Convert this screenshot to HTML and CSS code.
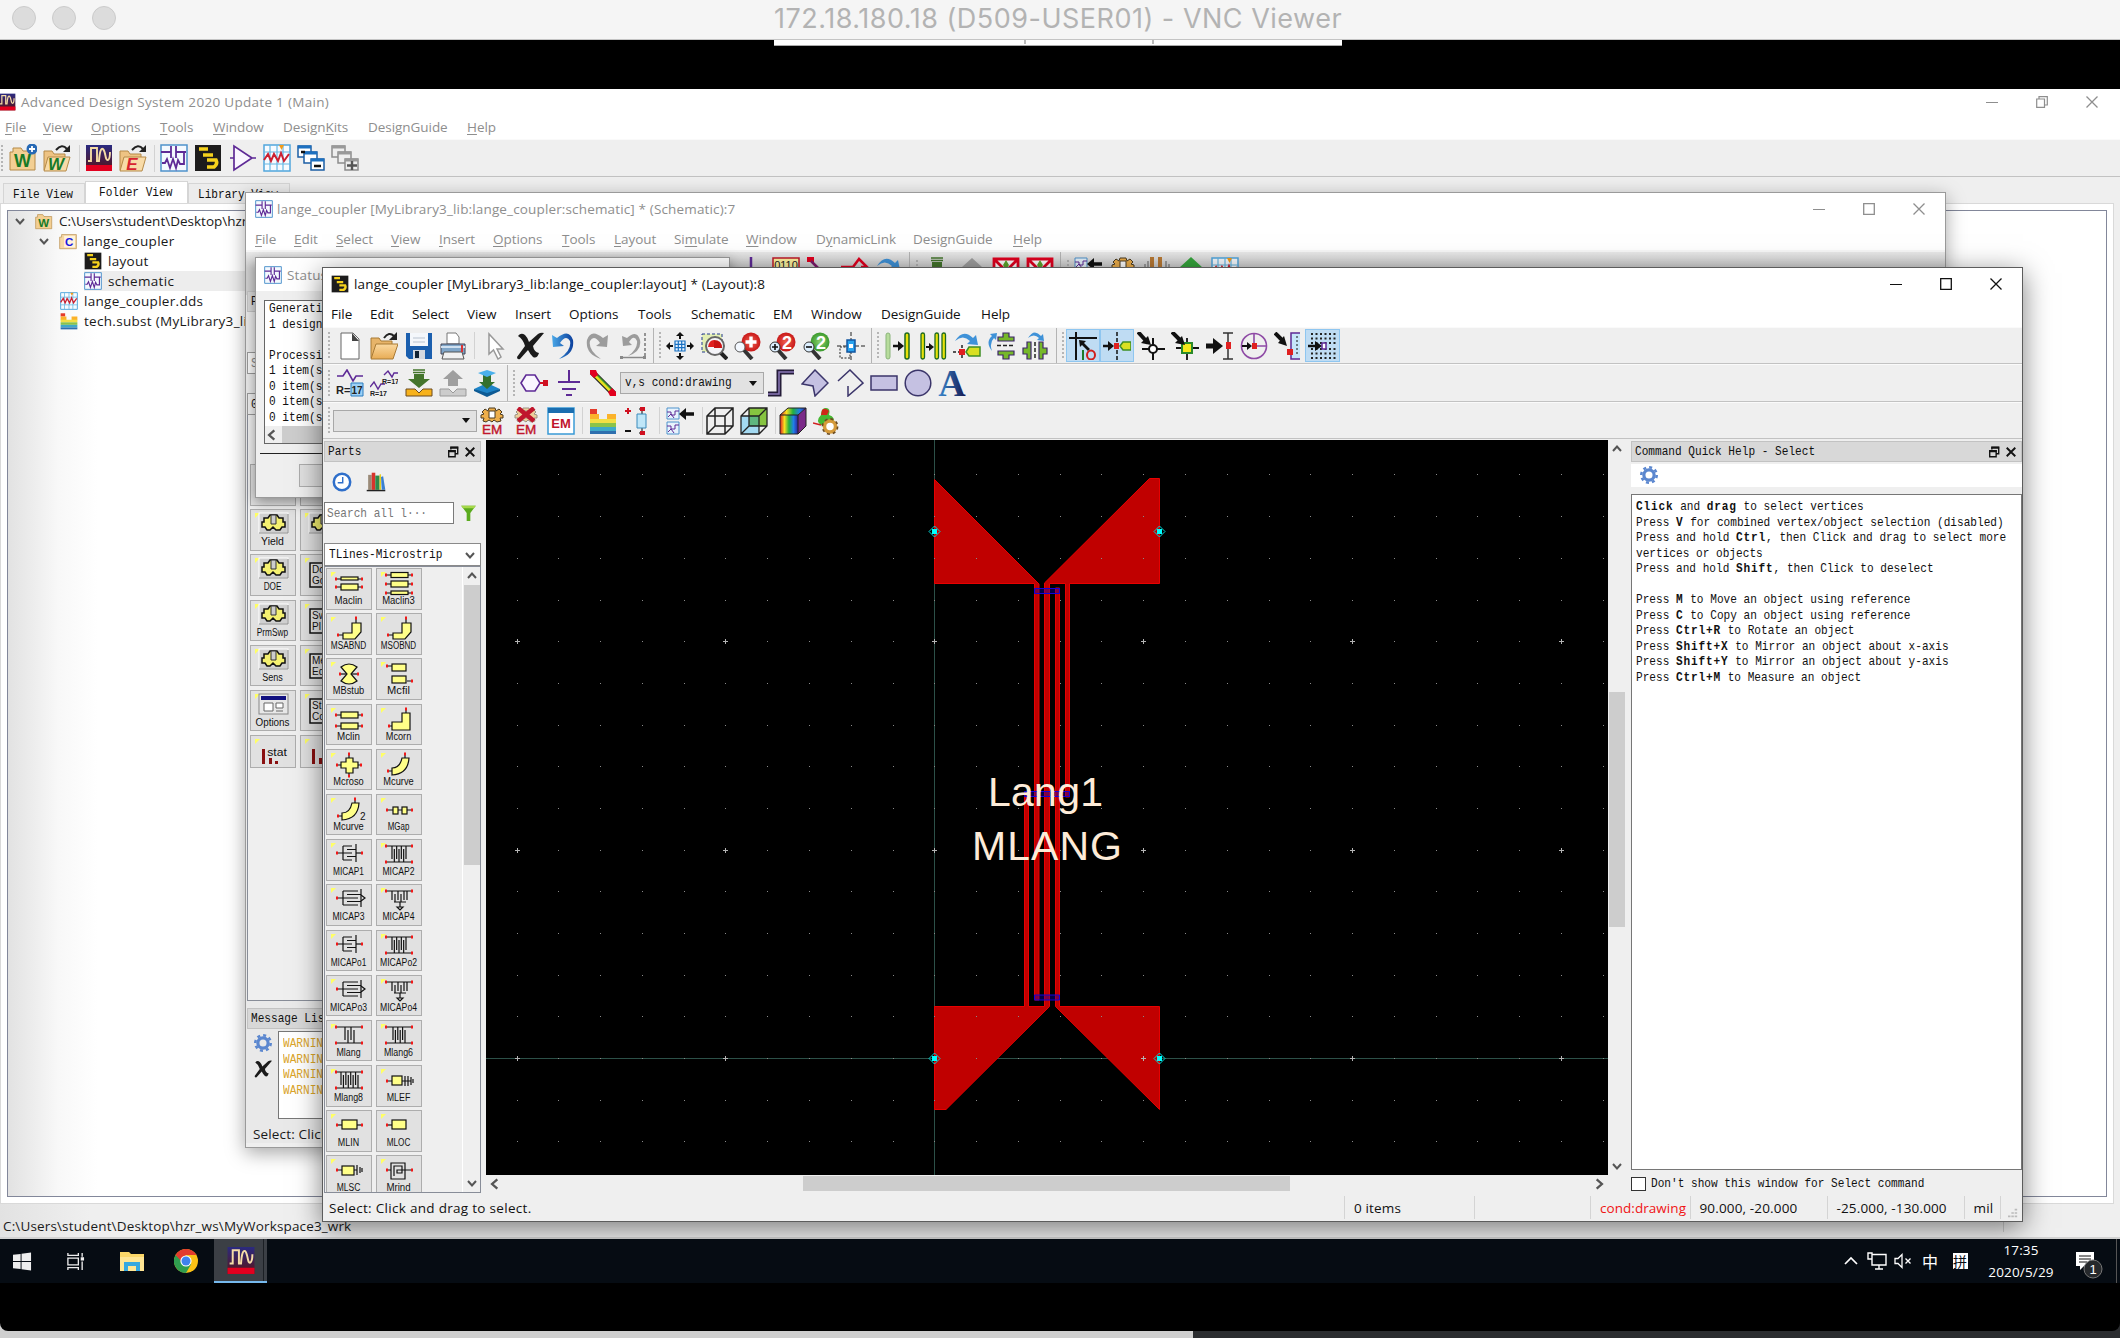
FILE: index.html
```html
<!DOCTYPE html>
<html lang="en">
<head>
<meta charset="utf-8">
<title>172.18.180.18 (D509-USER01) - VNC Viewer</title>
<link rel="stylesheet" href="styles.css">
</head>
<body>
<svg class="defs" aria-hidden="true">
<defs>
<linearGradient id="gUndo" x1="0" x2="1"><stop offset="0" stop-color="#4aa8e8"/><stop offset="1" stop-color="#0b3f9c"/></linearGradient>
<linearGradient id="gFold" x1="0" y1="0" x2="0" y2="1"><stop offset="0" stop-color="#fbd9a0"/><stop offset="1" stop-color="#e8ac55"/></linearGradient>
<linearGradient id="gAds" x1="0" y1="0" x2="0" y2="1"><stop offset="0" stop-color="#2a2a80"/><stop offset="1" stop-color="#5a1418"/></linearGradient>
<linearGradient id="gRain" x1="0" x2="1"><stop offset="0" stop-color="#e02020"/><stop offset=".25" stop-color="#f8e020"/><stop offset=".5" stop-color="#20b040"/><stop offset=".75" stop-color="#2080e8"/><stop offset="1" stop-color="#3020a0"/></linearGradient>
<linearGradient id="gA" x1="0" x2="1"><stop offset="0" stop-color="#3a8ad0"/><stop offset="1" stop-color="#14144c"/></linearGradient>
<radialGradient id="gRed"><stop offset="0" stop-color="#f06050"/><stop offset="1" stop-color="#c81818"/></radialGradient>
<radialGradient id="gGrn"><stop offset="0" stop-color="#8cd070"/><stop offset="1" stop-color="#3a9a2c"/></radialGradient>
<symbol id="wfolder" viewBox="0 0 28 28"><path d="M1 8V26H26V7H14L12 4H4V8Z" fill="#f3cf93" stroke="#b58a48"/><text x="13.500" y="23" class="glyph" font-size="18" fill="#177a27" text-anchor="middle">W</text></symbol>
<symbol id="wnew" viewBox="0 0 28 28"><use href="#wfolder"/><circle cx="23" cy="5" r="5.500" fill="#2769b5"/><path d="M23 2v6M20 5h6" stroke="#fff" stroke-width="1.800"/></symbol>
<symbol id="wopen" viewBox="0 0 28 28"><path d="M1 26V7H9L11 10H22V13" fill="#eec383" stroke="#b58a48"/><path d="M5 13H27L23 27H1Z" fill="#f8dba8" stroke="#b58a48"/><text x="13" y="26" class="glyph" font-size="17" fill="#177a27" text-anchor="middle" font-style="italic">W</text><path d="M13 6Q19-1 24 5" fill="none" stroke="#222" stroke-width="2"/><path d="M27 1V8H20Z" fill="#222"/></symbol>
<symbol id="eopen" viewBox="0 0 28 28"><path d="M1 26V7H9L11 10H22V13" fill="#eec383" stroke="#b58a48"/><path d="M5 13H27L23 27H1Z" fill="#f8dba8" stroke="#b58a48"/><text x="13" y="26" class="glyph" font-size="17" fill="#d8232f" text-anchor="middle" font-style="italic">E</text><path d="M13 6Q19-1 24 5" fill="none" stroke="#222" stroke-width="2"/><path d="M27 1V8H20Z" fill="#222"/></symbol>
<symbol id="ads" viewBox="0 0 28 28"><path d="M1 1H27V27H1Z" fill="url(#gAds)"/><path d="M1 21H27V27H1Z" fill="#e2001f"/><path d="M3 17H6V4H12V17H14Q15 3 18 5C21 8 20 17 23 16Q25 15 25 8" fill="none" stroke="#f5dca6" stroke-width="1.900"/></symbol>
<symbol id="sch" viewBox="0 0 28 28"><path d="M1 1H27V27H1Z" fill="#f4f9fe" stroke="#4f93cc" stroke-width="1.500"/><path d="M1 8H11M11 2V14M16 2V14M16 8H26M2 19H5L7 15 10 24 13 15 16 24 18 16 20 20H24V9" fill="none" stroke="#5e2a96" stroke-width="1.800"/></symbol>
<symbol id="lay" viewBox="0 0 28 28"><path d="M1 1H27V27H1Z" fill="#1d1c1c"/><path d="M5 5H14M9 11H19M13 16H22Q24 20 20 23H13" fill="none" stroke="#f6d21c" stroke-width="3.600"/></symbol>
<symbol id="amp" viewBox="0 0 28 28"><path d="M1 14H5M5 2V26L23 14ZM23 14H27" fill="#faf6ff" stroke="#5e2a96" stroke-width="1.700"/></symbol>
<symbol id="dds" viewBox="0 0 28 28"><path d="M1 1H27V27H1Z" fill="#f7fbff" stroke="#52a7dd" stroke-width="1.500"/><path d="M7 1V27M14 1V27M20 1V27M1 8H27M1 20H27" stroke="#66b8e4" stroke-width="1.200"/><path d="M1 16L5 10 8 17 11 10 15 17 18 9 21 17 26 10" fill="none" stroke="#cc2030" stroke-width="2"/><path d="M16 1H21L18.500 6Z" fill="#f39a17"/></symbol>
<symbol id="casc" viewBox="0 0 28 28"><g fill="#fff" stroke="#1d5fa5" stroke-width="1.500"><path d="M1 2H14V13H1Z"/><path d="M7 8H20V19H7Z"/><path d="M14 15H27V26H14Z"/></g><path d="M1 3H14M7 9H20M14 16H27" stroke="#1d70c0" stroke-width="3"/><path d="M4 8H8M17 22H24" stroke="#111" stroke-width="2.400"/></symbol>
<symbol id="cascg" viewBox="0 0 28 28"><g fill="#eee" stroke="#8d8d8d" stroke-width="1.500"><path d="M1 2H14V13H1Z"/><path d="M7 8H20V19H7Z"/><path d="M14 15H27V26H14Z"/></g><path d="M1 3H14M7 9H20M14 16H27" stroke="#999" stroke-width="3"/><path d="M16 21.500H26M21 17V26" stroke="#555" stroke-width="2.400"/></symbol>
<symbol id="cfold" viewBox="0 0 28 28"><path d="M1 8V26H27V4H4V8Z" fill="#f6d7a4" stroke="#b58a48"/><path d="M8 6H25V24H8Z" fill="#fff3de"/><text x="16" y="22" class="glyph" font-size="18" fill="#1a1ae0" text-anchor="middle">C</text></symbol>
<symbol id="sub" viewBox="0 0 28 28"><path d="M1 2H8V7H1Z" fill="#e43a2a"/><path d="M1 7H10V13H18V7H27V13H1Z" fill="#fbb22a"/><path d="M1 12H27V16H1Z" fill="#f3df45"/><path d="M1 16H27V20H1Z" fill="#8bc34a"/><path d="M1 20H27V24H1Z" fill="#3fa9c9"/><path d="M1 24H27V27H1Z" fill="#2e6fae"/></symbol>
<symbol id="new" viewBox="0 0 28 28"><path d="M5 1H17L23 7V27H5Z" fill="#fff" stroke="#666"/><path d="M16 1V9H23Z" fill="#444"/></symbol>
<symbol id="open" viewBox="0 0 28 28"><path d="M1 26V6H9L11 9H22V12" fill="#e7b469" stroke="#a87a35"/><path d="M6 12H28L23 27H1Z" fill="url(#gFold)" stroke="#a87a35"/><path d="M14 6Q19-1 24 4" fill="none" stroke="#222" stroke-width="2"/><path d="M27 0V8H19Z" fill="#222"/></symbol>
<symbol id="save" viewBox="0 0 28 28"><path d="M1 1H27V27H4L1 24Z" fill="#1b5fae"/><path d="M5 1H23V14H5Z" fill="#f4f7fb"/><path d="M8 6H20M8 10H20" stroke="#b9c3d0"/><path d="M8 18H20V27H8Z" fill="#d5d9e0"/><path d="M10 19H14V26H10Z" fill="#123"/></symbol>
<symbol id="print" viewBox="0 0 28 28"><path d="M8 12V1H17L20 5V12Z" fill="#fff" stroke="#777"/><path d="M2 12H26V22H2Z" fill="#7fa5c8" stroke="#445"/><path d="M2 15H26" stroke="#cfe0f0" stroke-width="2"/><path d="M5 20H23L25 27H3Z" fill="#f2f2f2" stroke="#555"/><path d="M23 13V20" stroke="#d33" stroke-width="2"/></symbol>
<symbol id="cur" viewBox="0 0 28 28"><path d="M7 2V22L11.500 18 16 27 19 25 15 17H21Z" fill="#fff" stroke="#999" stroke-width="1.500"/></symbol>
<symbol id="del" viewBox="0 0 28 28"><path d="M2 4Q5 0 9 3Q12 6 13 10L22 2Q25 0 28 1L17 14Q18 20 23 21Q21 27 17 25Q14 22 12 18L4 27Q1 28 1 25L9 14Q7 7 2 4Z" fill="#1b1b1b"/></symbol>
<symbol id="undo" viewBox="0 0 28 28"><path d="M2 3L3 15 14 14 10 11Q16 2 20 9Q22 18 9 27Q25 22 23 8Q19-4 7 6Z" fill="url(#gUndo)"/></symbol>
<symbol id="redo" viewBox="0 0 28 28"><path d="M24 3L23 15 12 14 16 11Q10 2 6 9Q4 18 17 27Q1 22 3 8Q7-4 19 6Z" fill="#9c9c9c"/></symbol>
<symbol id="undot" viewBox="0 0 28 28"><path d="M3 4L4 14 13 13 10 10Q15 2 18 9Q19 17 9 24Q23 19 21 8Q18-3 8 6Z" fill="#9c9c9c"/><path d="M26 1V24" stroke="#777" stroke-dasharray="3 2" stroke-width="1.500"/><path d="M3 25.500H25" stroke="#888" stroke-width="1.500"/><path d="M1 24H4V27H1ZM24 24H27V27H24Z" fill="#888"/></symbol>
<symbol id="pan" viewBox="0 0 28 28"><path d="M9 9H19V19H9ZM12.300 9V19M15.700 9V19M9 12.300H19M9 15.700H19" fill="#e6f2ff" stroke="#1971c2" stroke-width="1.200"/><path d="M14 7V3M14 21V25M7 14H3M21 14H25" stroke="#111" stroke-width="2"/><path d="M14 0L18 4H10ZM14 28L18 24H10ZM0 14L4 10V18ZM28 14L24 10V18Z" fill="#111"/></symbol>
<symbol id="zarea" viewBox="0 0 28 28"><path d="M2 2H22V20H2Z" fill="#e3efb4" stroke="#223a8c" stroke-dasharray="3 2"/><path d="M20 20L27 27" stroke="#222" stroke-width="4"/><circle cx="15" cy="14" r="9" fill="#f4f4f8" stroke="#666" stroke-width="2"/><path d="M15 8A6 6 0 0 0 9 14H15Z" fill="#fff"/><path d="M14 8V15H8Q9 8 14 8Z" fill="#e02020"/><path d="M14 8Q22 8 22 16H14Z" fill="#c81414"/></symbol>
<symbol id="zin" viewBox="0 0 28 28"><path d="M10 18L18 27" stroke="#333" stroke-width="4"/><circle cx="17" cy="10" r="9.500" fill="url(#gRed)"/><path d="M17 4.500V15.500M11.500 10H22.500" stroke="#fff" stroke-width="3.400"/><circle cx="6" cy="15" r="5" fill="#f3f8ff" stroke="#555"/></symbol>
<symbol id="z2i" viewBox="0 0 28 28"><path d="M9 18L17 27" stroke="#333" stroke-width="4"/><circle cx="17" cy="10" r="9.500" fill="url(#gRed)"/><text x="18" y="16.500" class="glyph" font-size="18" fill="#fff" text-anchor="middle">2</text><circle cx="6" cy="15" r="5" fill="#dcefff" stroke="#333"/><path d="M3 15H9M6 12V18" stroke="#111" stroke-width="1.600"/></symbol>
<symbol id="z2o" viewBox="0 0 28 28"><path d="M9 18L17 27" stroke="#333" stroke-width="4"/><circle cx="17" cy="10" r="9.500" fill="url(#gGrn)"/><text x="18" y="16.500" class="glyph" font-size="18" fill="#fff" text-anchor="middle">2</text><circle cx="6" cy="15" r="5" fill="#dcefff" stroke="#333"/><path d="M3 15H9" stroke="#111" stroke-width="1.600"/></symbol>
<symbol id="orig" viewBox="0 0 28 28"><path d="M14 0V28M0 14H28" stroke="#222" stroke-dasharray="4 2"/><path d="M3 15H13V26H3Z" fill="none" stroke="#222" stroke-dasharray="2 1.500"/><path d="M10 8H18V20H10Z" fill="#29a3ef" stroke="#1256a0" stroke-width="1.500"/><path d="M12 12H16V16H12Z" fill="#fff"/></symbol>
<symbol id="copy1" viewBox="0 0 28 28"><rect x="2" y="1" width="4" height="26" rx="2" fill="#b7dc9c" stroke="#8ab47a"/><rect x="21" y="1" width="4" height="26" rx="2" fill="#e8e20a" stroke="#1e6a1e" stroke-width="1.500"/><path d="M9 14H15" stroke="#111" stroke-width="2.500"/><path d="M14 9L20 14 14 19Z" fill="#111"/></symbol>
<symbol id="copy2" viewBox="0 0 28 28"><g fill="#e8e20a" stroke="#1e6a1e" stroke-width="1.300"><rect x="2" y="1" width="3.500" height="26" rx="1.700"/><rect x="16" y="1" width="3.500" height="26" rx="1.700"/><rect x="23" y="1" width="3.500" height="26" rx="1.700"/></g><path d="M7 15H11" stroke="#111" stroke-width="2"/><path d="M10 11L15 15 10 19Z" fill="#111"/></symbol>
<symbol id="rot" viewBox="0 0 28 28"><path d="M2 9Q10-4 20 6L23 3 25 13 14 12 17 9Q10 2 2 9Z" fill="#3f92d8"/><path d="M9 13V28M0 20H6" stroke="#222" stroke-dasharray="3 2" stroke-width="1.500"/><path d="M6 17H12V23H6Z" fill="#e02020"/><path d="M13 20L16 15H27V24H16Z" fill="#d9e021" stroke="#3f8f24" stroke-width="1.500"/></symbol>
<symbol id="mirx" viewBox="0 0 28 28"><path d="M5 19Q-2 10 5 4L3 2 10 1 9 8 7 6Q2 11 5 19Z" fill="#3f92d8"/><path d="M10 13.500H27" stroke="#222" stroke-dasharray="4 2" stroke-width="1.500"/><path d="M16 1H22V5H27V9H11V5H16ZM11 19H27V23H22V27H16V23H11Z" fill="#76b82a" stroke="#3d256b" stroke-width="1.200"/></symbol>
<symbol id="miry" viewBox="0 0 28 28"><path d="M7 6Q13-4 20 4L22 2 23 9 16 8 18 6Q13 1 7 6Z" fill="#3f92d8"/><path d="M14 10V28" stroke="#222" stroke-dasharray="4 2" stroke-width="1.500"/><path d="M6 10H10V27H6V22H2V16H6ZM18 10H22V16H26V22H22V27H18Z" fill="#76b82a" stroke="#3d256b" stroke-width="1.200"/></symbol>
<symbol id="s1" viewBox="0 0 28 28"><path d="M7 0V28M0 6H28" stroke="#111" stroke-width="2"/><path d="M10 8L17 9 15 11 21 17 19 19 13 13 11 15Z" fill="#111"/><path d="M14 18V28" stroke="#1e7a2a" stroke-width="2"/><ellipse cx="22" cy="23" rx="4" ry="4.500" fill="none" stroke="#d0201c" stroke-width="2"/></symbol>
<symbol id="s2" viewBox="0 0 28 28"><path d="M14 0V28" stroke="#111" stroke-dasharray="4 2" stroke-width="1.500"/><path d="M0 14H7" stroke="#111" stroke-width="2.500"/><path d="M5 9L11 14 5 19Z" fill="#111"/><path d="M11 11H16V17H11Z" fill="#e02020"/><path d="M17 14L20 10H28V18H20Z" fill="#d9e021" stroke="#3f8f24" stroke-width="1.500"/></symbol>
<symbol id="s3" viewBox="0 0 28 28"><path d="M16 6V28M5 17H28" stroke="#111" stroke-width="2"/><circle cx="16" cy="17" r="4" fill="#fff" stroke="#111" stroke-width="2"/><path d="M1 0L11 11" stroke="#111" stroke-width="4"/><path d="M14 13L4 11 11 4Z" fill="#111"/></symbol>
<symbol id="s4" viewBox="0 0 28 28"><path d="M16 6V28M5 16H28" stroke="#111" stroke-width="1.800"/><path d="M11 11H21V21H11Z" fill="#f3e81a" stroke="#2a8a2a" stroke-width="2"/><path d="M1 0L10 9" stroke="#111" stroke-width="4"/><path d="M14 13L4 11 11 4Z" fill="#111"/></symbol>
<symbol id="s5" viewBox="0 0 28 28"><path d="M0 14H8" stroke="#111" stroke-width="5"/><path d="M7 6L17 14 7 22Z" fill="#111"/><path d="M22 1V27M17 1H27M17 27H27" stroke="#333" stroke-width="1.500"/><path d="M20 10H25V17H20Z" fill="#e02020"/></symbol>
<symbol id="s6" viewBox="0 0 28 28"><circle cx="14" cy="14" r="12.500" fill="none" stroke="#8e4aa5" stroke-width="1.600"/><path d="M14 2V14H27" fill="none" stroke="#8e4aa5" stroke-width="1.600"/><path d="M2 14H9" stroke="#111" stroke-width="2"/><path d="M7 10L12 14 7 18Z" fill="#111"/><path d="M12 11H17V17H12Z" fill="#e02020"/></symbol>
<symbol id="s7" viewBox="0 0 28 28"><path d="M17 1H26V27H17Z" fill="#c6e6fa"/><path d="M26 1H17V27H26" fill="none" stroke="#5e2a96" stroke-width="1.500"/><path d="M23 4V24" stroke="#111" stroke-dasharray="2 2"/><path d="M1 1L9 9" stroke="#111" stroke-width="4"/><path d="M13 14L4 11 10 4Z" fill="#111"/><path d="M13 17H19V23H13Z" fill="#e02020"/></symbol>
<symbol id="s8" viewBox="0 0 28 28"><path d="M3 2H28M3 6.500H28M3 11H28M3 17H28M3 21.500H28M3 26H28" stroke="#222" stroke-width="2" stroke-dasharray="2 2.500"/><path d="M0 14H9" stroke="#111" stroke-width="2.500"/><path d="M7 9L14 14 7 19Z" fill="#111"/><path d="M14 11H18V17H14Z" fill="#fff" stroke="#5e2a96" stroke-width="1.500"/></symbol>
<symbol id="par" viewBox="0 0 28 28"><path d="M1 7H7L11 1 17 12 20 7H27" fill="none" stroke="#5e2a96" stroke-width="1.600"/><path d="M15 14H27V27H15Z" fill="#9dd0f5" stroke="#2b7dbf"/><text x="0" y="25" class="glyph" font-size="11" fill="#222">R=</text><text x="15.500" y="25" class="glyph" font-size="10" fill="#222">17</text></symbol>
<symbol id="par2" viewBox="0 0 28 28"><path d="M14 6L18 2 22 8 24 4H28M0 18L4 13 8 20 11 15H15" fill="none" stroke="#5e2a96" stroke-width="1.400"/><text x="12" y="15" class="glyph" font-size="7" fill="#222">R=17</text><text x="0" y="27" class="glyph" font-size="7" fill="#222">R=17</text></symbol>
<symbol id="push" viewBox="0 0 28 28"><path d="M8 1H20M8 3.500H20" stroke="#44752c" stroke-width="1.600"/><path d="M9 5H19V10H25L14 19 3 10H9Z" fill="#44752c"/><path d="M1 20H10L14 24 18 20H27V27H1Z" fill="#f7b21c" stroke="#6a4a20"/></symbol>
<symbol id="pop" viewBox="0 0 28 28"><path d="M14 1L24 10H19V17H9V10H4Z" fill="#9f9f9f"/><path d="M1 20H10L14 24 18 20H27V27H1Z" fill="#ccc" stroke="#999"/></symbol>
<symbol id="stack" viewBox="0 0 28 28"><path d="M1 20L14 14 27 20 14 27Z" fill="#1d84c8"/><path d="M1 20L14 24 27 20V22L14 28 1 22Z" fill="#0d5a94"/><path d="M10 6H18V13H22L14 20 6 13H10Z" fill="#34702c"/><path d="M5 4L14 1 23 4 14 8Z" fill="#4ab0ec"/></symbol>
<symbol id="port" viewBox="0 0 28 28"><path d="M1 14L6 6H15L20 14 15 22H6Z" fill="#faf6ff" stroke="#5e2a96" stroke-width="1.600"/><path d="M20 14H24" stroke="#d01020" stroke-width="2"/><path d="M23 11H28V17H23Z" fill="#d01020"/></symbol>
<symbol id="gnd" viewBox="0 0 28 28"><path d="M14 1V13M3 13H25M7 20H21M11 26H17" stroke="#5e2a96" stroke-width="2"/></symbol>
<symbol id="wire" viewBox="0 0 28 28"><path d="M3 3L25 25" stroke="#222" stroke-width="6"/><path d="M6 6L23 23" stroke="#e9e01c" stroke-width="3.500"/><path d="M7 5L24 22" stroke="#3b9a2e" stroke-width="1.200"/><path d="M1 1H7L9 6 5 9 1 5ZM27 27H21L19 23 23 19 27 23Z" fill="#e2001f"/></symbol>
<symbol id="trace" viewBox="0 0 28 28"><path d="M1 25H12V3H27" fill="none" stroke="#241c38" stroke-width="5"/><path d="M1 25H12V3H27" fill="none" stroke="#8a78b8" stroke-width="1.500"/></symbol>
<symbol id="poly" viewBox="0 0 28 28"><path d="M14 1L27 14 14 27 12 17 1 15Z" fill="#c5c1e2" stroke="#3b356a" stroke-width="1.500"/></symbol>
<symbol id="pline" viewBox="0 0 28 28"><path d="M2 12L14 1 27 14 12 27V17" fill="none" stroke="#3b356a" stroke-width="1.500"/></symbol>
<symbol id="rect" viewBox="0 0 28 28"><path d="M1 7H27V21H1Z" fill="#c5c1e2" stroke="#3b356a" stroke-width="1.500"/></symbol>
<symbol id="circ" viewBox="0 0 28 28"><circle cx="14" cy="14" r="12.800" fill="#c5c1e2" stroke="#3b356a" stroke-width="1.500"/></symbol>
<symbol id="txt" viewBox="0 0 28 28"><text x="14" y="27" class="serif" font-size="38" fill="url(#gA)" text-anchor="middle">A</text></symbol>
<symbol id="cog" viewBox="0 0 28 28"><path d="M11 1H17L18 4 21 2 24 5 22 7 25 8V11H22L23 14 19 15 16 13 14 15 11 13 8 15 5 14 6 11H3V8L6 7 4 5 7 2 10 4Z" fill="#edae4a" stroke="#4a3a20"/><path d="M11 4H17V11H11Z" fill="#fff" stroke="#4a3a20"/></symbol>
<symbol id="em1" viewBox="0 0 28 28"><use href="#cog"/><text x="14" y="27" class="plain" font-size="13.500" fill="#c0152c" stroke="#c0152c" stroke-width=".4" text-anchor="middle">EM</text></symbol>
<symbol id="em2" viewBox="0 0 28 28"><g opacity=".5"><use href="#cog"/></g><path d="M6 1L22 14M22 1L6 14" stroke="#c0152c" stroke-width="4.500"/><text x="14" y="27" class="plain" font-size="13.500" fill="#c0152c" stroke="#c0152c" stroke-width=".4" text-anchor="middle">EM</text></symbol>
<symbol id="em3" viewBox="0 0 28 28"><path d="M1 1H27V27H1Z" fill="#fff" stroke="#3a9ad6" stroke-width="1.500"/><path d="M1 1H27V6H1Z" fill="#1a6eb0"/><text x="14" y="20.500" class="glyph" font-size="13" fill="#c0152c" text-anchor="middle">EM</text></symbol>
<symbol id="comp" viewBox="0 0 28 28"><path d="M18 2V26M15 2H21M15 26H21" stroke="#555" stroke-width="1.500"/><path d="M13 7H22V21H13Z" fill="#bfe6f8" stroke="#3a8abb"/><path d="M16 0H21V4H16ZM16 24H21V28H16Z" fill="#d01020"/><path d="M1 4H7M4 1V7" stroke="#d01020" stroke-width="2"/><path d="M1 24H7" stroke="#111" stroke-width="2"/></symbol>
<symbol id="s2l" viewBox="0 0 28 28"><g fill="#e8f3fd" stroke="#4f93cc"><path d="M1 1H13V12H1Z"/><path d="M1 15H13V27H1Z"/></g><path d="M1 5H5V8H9V4H13M2 10L5 7 8 11M1 19H5V22H9V18H13M2 25L5 22 8 26" fill="none" stroke="#5e2a96"/><path d="M19 7H28" stroke="#111" stroke-width="3.500"/><path d="M20 1V13L13 7Z" fill="#111"/></symbol>
<symbol id="cube" viewBox="0 0 28 28"><path d="M1 9L9 1H27V19L19 27H1ZM1 9H19V27M19 9L27 1M9 1V19H27M9 19L1 27" fill="none" stroke="#222" stroke-width="1.500"/></symbol>
<symbol id="cubef" viewBox="0 0 28 28"><path d="M1 9H19V27H1Z" fill="#a4daf2"/><path d="M9 1H27V19H9Z" fill="#86c440"/><path d="M9 9H19V19H9Z" fill="#5fb67f"/><path d="M1 9L9 1H27V19L19 27H1ZM1 9H19V27M19 9L27 1M9 1V19H27M9 19L1 27" fill="none" stroke="#222" stroke-width="1.300"/></symbol>
<symbol id="cuber" viewBox="0 0 28 28"><path d="M1 8H19V27H1Z" fill="url(#gRain)"/><path d="M1 8L9 1H27L19 8Z" fill="url(#gRain)"/><path d="M19 8L27 1V19L19 27Z" fill="#7a2a88"/><path d="M1 8L9 1H27V19L19 27H1ZM1 8H19V27M19 8L27 1" fill="none" stroke="#222"/></symbol>
<symbol id="rad" viewBox="0 0 28 28"><path d="M12 1Q18 0 16 8Q23 10 20 17L8 18Q2 14 8 8Q8 2 12 1Z" fill="#46b832"/><path d="M9 3Q12 0 16 4L14 8H8Z" fill="#d02818"/><path d="M0 16L8 18" stroke="#d02020" stroke-width="1.500"/><circle cx="17" cy="19.500" r="5.500" fill="#fff" stroke="#d59a3a" stroke-width="3.500"/><circle cx="17" cy="19.500" r="7.600" fill="none" stroke="#6a4a20" stroke-width="1.600" stroke-dasharray="3 3"/></symbol>
<symbol id="gear" viewBox="0 0 28 28"><circle cx="14" cy="14" r="8" fill="none" stroke="#5b87cf" stroke-width="5"/><circle cx="14" cy="14" r="12" fill="none" stroke="#5b87cf" stroke-width="4" stroke-dasharray="4.700 4.700"/></symbol>
<symbol id="clock" viewBox="0 0 28 28"><circle cx="14" cy="14" r="11.500" fill="#fff" stroke="#2f6fca" stroke-width="3.500"/><path d="M15 7V15H8" fill="none" stroke="#2f6fca" stroke-width="2"/></symbol>
<symbol id="books" viewBox="0 0 28 28"><path d="M3 4H8V25H3Z" fill="#9a8a78"/><path d="M8 1H13V25H8Z" fill="#d8342c"/><path d="M13 5H19V25H13Z" fill="#2f8a4c"/><path d="M19 3H21V25H19Z" fill="#e8d020"/><path d="M21 7L24 6 27 25H22Z" fill="#3a80d0"/><path d="M1 26H27" stroke="#222" stroke-width="2"/></symbol>
<symbol id="filt" viewBox="0 0 28 28"><path d="M2 2H26L17 14V27H11V14Z" fill="#5aab1e"/><path d="M2 2H26L23 6H5Z" fill="#a6d84a"/></symbol>
<symbol id="dock" viewBox="0 0 14 14"><path d="M4.500 4V1.500H12.500V9H10M2 5.500H9.500V12.500H2Z" fill="none" stroke="#111" stroke-width="1.600"/><path d="M4 2H13M1.500 6H10" stroke="#111" stroke-width="2.400"/></symbol>
<symbol id="x" viewBox="0 0 14 14"><path d="M2 2L12 12M12 2L2 12" stroke="#111" stroke-width="2.200"/></symbol>
<symbol id="wmin" viewBox="0 0 12 12"><path d="M0 6.500H12" stroke="currentColor"/></symbol>
<symbol id="wmax" viewBox="0 0 12 12"><path d="M.7.700H11.300V11.300H.7Z" fill="none" stroke="currentColor" stroke-width="1.300"/></symbol>
<symbol id="wres" viewBox="0 0 12 12"><path d="M.7 3H8.500V11.300H.7ZM3 3V.700H11.300V9H8.500" fill="none" stroke="currentColor" stroke-width="1.200"/></symbol>
<symbol id="wx" viewBox="0 0 12 12"><path d="M.5.500L11.500 11.500M11.500.500L.5 11.500" stroke="currentColor" stroke-width="1.300"/></symbol>
<symbol id="chev" viewBox="0 0 12 12"><path d="M2 4L6 8.500 10 4" fill="none" stroke="currentColor" stroke-width="2"/></symbol>
<symbol id="num" viewBox="0 0 28 28"><path d="M1 1H27V20H1Z" fill="#fff3a0" stroke="#c01828" stroke-width="1.500"/><text x="14" y="12" class="plain" font-size="11" fill="#222" text-anchor="middle">0110</text></symbol>
<symbol id="vline" viewBox="0 0 28 28"><path d="M13 0V28" stroke="#5e2a96" stroke-width="2.500"/></symbol>
<symbol id="rwire" viewBox="0 0 28 28"><path d="M0 0H7V5H0Z" fill="#e2001f"/><path d="M4 4L24 24" stroke="#7a1a6a" stroke-width="2.500"/></symbol>
<symbol id="rtri" viewBox="0 0 28 28"><path d="M0 10H12L18 2 26 10H20" fill="none" stroke="#e2001f" stroke-width="2.500"/></symbol>
<symbol id="rx" viewBox="0 0 28 28"><path d="M2 2H26V26H2ZM2 2L26 26M26 2L2 26" fill="#fff" stroke="#e2001f" stroke-width="2.800"/><path d="M14 3L17 8 14 13 11 8Z" fill="#5da52c"/></symbol>
<symbol id="bars" viewBox="0 0 28 28"><path d="M2 7V28M5 4V28M23 4V28M26 7V28" stroke="#888" stroke-width="1.500"/><path d="M9 0V28M17 0V28" stroke="#b97a35" stroke-width="4"/></symbol>
<symbol id="gup" viewBox="0 0 28 28"><path d="M14 0L26 11H20V24H8V11H2Z" fill="#35a53c"/></symbol>
</defs>
</svg>

<div class="screen">
  <header class="mac">
    <i class="light"></i><i class="light"></i><i class="light"></i>
    <span class="mac-title">172.18.180.18 (D509-USER01) - VNC Viewer</span>
  </header>
  <div class="vncbar"><i></i><i></i></div>

  <main class="desktop">
    <section class="win main-win">
      <div class="titlebar"><svg class="ticon"><use href="#ads"/></svg><span class="ui t-main">Advanced Design System 2020 Update 1 (Main)</span>
        <span class="controls"><svg><use href="#wmin"/></svg><svg><use href="#wres"/></svg><svg><use href="#wx"/></svg></span></div>
      <nav class="menu ui"><span><u>F</u>ile</span><span><u>V</u>iew</span><span><u>O</u>ptions</span><span><u>T</u>ools</span><span><u>W</u>indow</span><span>Design<u>K</u>its</span><span>DesignGuide</span><span><u>H</u>elp</span></nav>
      <div class="toolbar" data-icons="wnew wopen | ads eopen | sch lay amp dds casc cascg"></div>
      <div class="tabs"><span class="tab"><b class="mono">File View</b></span><span class="tab on"><b class="mono">Folder View</b></span><span class="tab"><b class="mono">Library View</b></span></div>
      <div class="pane"><div class="tree ui">
        <div class="row l0"><svg class="ch"><use href="#chev"/></svg><svg class="ic"><use href="#wfolder"/></svg>C:\Users\student\Desktop\hzr_ws</div>
        <div class="row l1"><svg class="ch"><use href="#chev"/></svg><svg class="ic"><use href="#cfold"/></svg>lange_coupler</div>
        <div class="row l2"><svg class="ic"><use href="#lay"/></svg>layout</div>
        <div class="row l2 sel"><svg class="ic"><use href="#sch"/></svg>schematic</div>
        <div class="row l1b"><svg class="ic"><use href="#dds"/></svg>lange_coupler.dds</div>
        <div class="row l1b"><svg class="ic"><use href="#sub"/></svg>tech.subst (MyLibrary3_lib)</div>
      </div></div>
      <footer class="main-status ui"><span class="path">C:\Users\student\Desktop\hzr_ws\MyWorkspace3_wrk</span></footer>
    </section>

    <section class="win sch-win">
      <div class="titlebar"><svg class="ticon"><use href="#sch"/></svg><span class="ui t-sch">lange_coupler [MyLibrary3_lib:lange_coupler:schematic] * (Schematic):7</span>
        <span class="controls"><svg><use href="#wmin"/></svg><svg><use href="#wmax"/></svg><svg><use href="#wx"/></svg></span></div>
      <nav class="menu ui"><span><u>F</u>ile</span><span><u>E</u>dit</span><span><u>S</u>elect</span><span><u>V</u>iew</span><span><u>I</u>nsert</span><span><u>O</u>ptions</span><span><u>T</u>ools</span><span><u>L</u>ayout</span><span>Si<u>m</u>ulate</span><span><u>W</u>indow</span><span>D<u>y</u>namicLink</span><span>DesignGuide</span><span><u>H</u>elp</span></nav>
      <div class="toolbar" data-icons="vline num rwire rtri rot || push pop rx rx || s2l cog bars gup dds"></div>
      <div class="sch-body">
        <div class="dock-head"><span class="mono">Parts</span></div>
        <div class="stub s"><span class="mono">S</span></div>
        <div class="stub"><span class="mono">0</span></div>
        <div class="palette sch-parts"></div>
        <div class="dock-head msg-head"><span class="mono">Message List</span></div>
        <div class="msg"><div class="msg-tools"><svg><use href="#gear"/></svg><svg><use href="#del"/></svg></div>
          <div class="msg-text"><span class="mono">WARNING</span><span class="mono">WARNING</span><span class="mono">WARNING</span><span class="mono">WARNING</span></div></div>
        <div class="sch-status ui">Select: Click and drag</div>
      </div>
    </section>

    <section class="win stat-win">
      <div class="titlebar"><svg class="ticon"><use href="#sch"/></svg><span class="ui">Status</span></div>
      <div class="stat-body">
        <div class="stat-text"><span class="mono">Generating</span><span class="mono">1 design(s)</span><span class="mono">&nbsp;</span><span class="mono">Processing</span><span class="mono">1 item(s)</span><span class="mono">0 item(s)</span><span class="mono">0 item(s)</span><span class="mono">0 item(s)</span>
          <div class="hscroll"><svg class="left"><use href="#chev"/></svg><i></i></div></div>
        <hr><div class="btn"></div>
      </div>
    </section>

    <section class="win lay-win">
      <div class="titlebar"><svg class="ticon"><use href="#lay"/></svg><span class="ui t-lay">lange_coupler [MyLibrary3_lib:lange_coupler:layout] * (Layout):8</span>
        <span class="controls"><svg><use href="#wmin"/></svg><svg><use href="#wmax"/></svg><svg><use href="#wx"/></svg></span></div>
      <nav class="menu ui"><span>File</span><span>Edit</span><span>Select</span><span>View</span><span>Insert</span><span>Options</span><span>Tools</span><span>Schematic</span><span>EM</span><span>Window</span><span>DesignGuide</span><span>Help</span></nav>
      <div class="toolbar" data-icons="new open save print | cur del undo redo undot || pan zarea zin z2i z2o orig || copy1 copy2 rot mirx miry || s1* s2* s3 s4 s5 s6 s7 s8*"></div>
      <div class="toolbar" data-icons="par par2 push pop stack || port gnd wire combo:v,s_cond:drawing trace poly pline rect circ txt"></div>
      <div class="toolbar row3" data-icons="combo: em1 em2 em3 | sub comp | s2l | cube cubef | cuber rad"></div>
      <div class="lay-body">
        <aside class="parts">
          <div class="dock-head"><span class="mono">Parts</span><span class="sp"></span><svg><use href="#dock"/></svg><svg><use href="#x"/></svg></div>
          <div class="pt-tabs"><svg><use href="#clock"/></svg><svg><use href="#books"/></svg></div>
          <div class="search"><div class="field"><span class="mono">Search all l···</span></div><svg><use href="#filt"/></svg></div>
          <div class="select"><span class="mono">TLines-Microstrip</span><svg><use href="#chev"/></svg></div>
          <div class="plist"><div class="palette lay-parts"></div>
            <div class="vscroll"><svg class="up"><use href="#chev"/></svg><i></i><svg class="dn"><use href="#chev"/></svg></div></div>
        </aside>
        <div class="view">
          <svg class="canvas" viewBox="486 440 1122 735">
            <path class="axis" d="M934.500 440V1175M486 1058.500H1608"/>
            <g class="metal">
              <path d="M934.500 479.500L1039 584V1000H1034.500V583.500H934.500Z"/>
              <path d="M1044.500 583L1149.500 478.500H1159.500V583.500H1069.500V797H1065.500V583.500H1049.500V1006.500L946 1109.500H934.500V1006.500H1024.500V793H1028.500V1006.500H1044.500Z"/>
              <path d="M1055.500 588V1006.500L1159.500 1109.500V1006.500H1059.500V588Z"/>
            </g>
            <g class="dots"></g>
            <g class="bridge"><path d="M1034.500 588.500H1059.500V593.500H1034.500Z"/><path d="M1024.500 791.500H1069.500V796.500H1024.500Z"/><path d="M1034.500 995H1059.500V1000H1034.500Z"/></g>
            <g class="pins"><path d="M929 531.500L934.500 526 940 531.500 934.500 537Z"/><path d="M1154 531.500L1159.500 526 1165 531.500 1159.500 537Z"/><path d="M929 1058.500L934.500 1053 940 1058.500 934.500 1064Z"/><path d="M1154 1058.500L1159.500 1053 1165 1058.500 1159.500 1064Z"/></g>
            <g class="pinc"><path d="M932 529h5v5h-5zM1157 529h5v5h-5zM932 1056h5v5h-5zM1157 1056h5v5h-5z"/></g>
            <text x="988" y="806" textLength="115">Lang1</text><text x="972" y="859.500" textLength="150">MLANG</text>
          </svg>
          <div class="vscroll vbar"><svg class="up"><use href="#chev"/></svg><i></i><svg class="dn"><use href="#chev"/></svg></div>
          <div class="hbar"><svg class="left"><use href="#chev"/></svg><i></i><svg class="right"><use href="#chev"/></svg></div>
        </div>
        <aside class="help">
          <div class="dock-head"><span class="mono">Command Quick Help - Select</span><span class="sp"></span><svg><use href="#dock"/></svg><svg><use href="#x"/></svg></div>
          <div class="gearbar"><svg><use href="#gear"/></svg></div>
          <div class="helptext">
            <span class="mono"><b>Click</b> and <b>drag</b> to select vertices</span>
            <span class="mono">Press <b>V</b> for combined vertex/object selection (disabled)</span>
            <span class="mono">Press and hold <b>Ctrl</b>, then Click and drag to select more</span>
            <span class="mono">vertices or objects</span>
            <span class="mono">Press and hold <b>Shift</b>, then Click to deselect</span>
            <span class="mono">&nbsp;</span>
            <span class="mono">Press <b>M</b> to Move an object using reference</span>
            <span class="mono">Press <b>C</b> to Copy an object using reference</span>
            <span class="mono">Press <b>Ctrl+R</b> to Rotate an object</span>
            <span class="mono">Press <b>Shift+X</b> to Mirror an object about x-axis</span>
            <span class="mono">Press <b>Shift+Y</b> to Mirror an object about y-axis</span>
            <span class="mono">Press <b>Ctrl+M</b> to Measure an object</span>
          </div>
          <div class="check"><i></i><span class="mono">Don't show this window for Select command</span></div>
        </aside>
      </div>
      <footer class="lay-status ui"><span class="s-msg">Select: Click and drag to select.</span><span>0 items</span><span></span><span class="red">cond:drawing</span><span>90.000, -20.000</span><span>-25.000, -130.000</span><span>mil</span><svg viewBox="0 0 12 12"><path d="M8 1h3v2H8zM8 5h3v2H8zM4 5h3v2H4zM8 9h3v2H8zM4 9h3v2H4zM0 9h3v2H0z" fill="#bbb"/></svg></footer>
    </section>

    <footer class="taskbar">
      <div class="tk"><svg viewBox="0 0 20 20"><path d="M0 3L8 2V9.500H0ZM9 1.800L19 .500V9.500H9ZM0 10.500H8V18L0 17ZM9 10.500H19V19.500L9 18.200Z" fill="#eee"/></svg></div>
      <div class="tk"><svg viewBox="0 0 20 20"><path d="M2 1V3.500H13V1M2 19V16.500H13V19M2 6.500H13V13.500H2ZM17 1V5M17 10V19" fill="none" stroke="#eee" stroke-width="1.400"/><path d="M15.500 5.500H19V9H15.500Z" fill="#eee"/></svg></div>
      <div class="tk"><svg class="big" viewBox="0 0 24 24"><path d="M0 3H9L11 5H24V22H0Z" fill="#fbd768"/><path d="M0 8H24V22H0Z" fill="#ffe694"/><path d="M4 22V13H20V22H16V17H8V22Z" fill="#35a8e0"/></svg></div>
      <div class="tk"><svg class="big" viewBox="0 0 24 24"><circle cx="12" cy="12" r="12" fill="#fbc116"/><path d="M12 12L1.600 6A12 12 0 0 0 12 24L17.200 15Z" fill="#2f9e4f"/><path d="M1.600 6A12 12 0 0 1 22.400 6H12L7 12Z" fill="#e33b2e"/><circle cx="12" cy="12" r="5.600" fill="#fff"/><circle cx="12" cy="12" r="4.500" fill="#3f82ee"/></svg></div>
      <div class="tk act"><svg class="huge"><use href="#ads"/></svg></div>
      <div class="tray">
        <svg viewBox="0 0 20 20"><path d="M4 13L10 7 16 13" fill="none" stroke="#fff" stroke-width="1.700"/></svg>
        <svg viewBox="0 0 20 20"><path d="M5 3.500H19V14H5ZM8 18H16M12 14V18M1 2H5V8H1Z" fill="none" stroke="#fff" stroke-width="1.400"/></svg>
        <svg viewBox="0 0 20 20"><path d="M2 7.500H5L9 3.500V16.500L5 12.500H2ZM12.500 7.500L17.500 12.500M17.500 7.500L12.500 12.500" fill="none" stroke="#fff" stroke-width="1.300"/></svg>
        <span class="cn">中</span><span class="cn ime">拼</span>
      </div>
      <div class="clock ui"><span>17:35</span><span>2020/5/29</span></div>
      <div class="notif"><svg viewBox="0 0 28 28"><path d="M1 1H19V15H9L5 19V15H1Z" fill="#fff"/><path d="M4 5H16M4 8H16M4 11H12" stroke="#111"/><circle cx="18" cy="18" r="9" fill="#26292c" stroke="#777"/><text x="18" y="23" class="plain" font-size="13" fill="#fff" text-anchor="middle">1</text></svg></div>
    </footer>
  </main>
  <div class="bottom"></div>
</div>
<script src="app.js"></script>
</body>
</html>
```

FILE: styles.css
```css
* { box-sizing: border-box; }
body { margin: 0; background: #000; overflow: hidden; }
u { text-underline-offset: 2px; }
.defs { position: absolute; width: 0; height: 0; }
.glyph { font-family: "Liberation Sans", sans-serif; font-weight: 700; }
.plain { font-family: "Liberation Sans", sans-serif; }
.serif { font-family: "Liberation Serif", serif; font-weight: 700; }
.ui { font-family: "Open Sans", "Noto Sans", sans-serif; font-size: 13.5px; letter-spacing: .15px; white-space: nowrap; }
.mono { display: inline-block; font: 13.4px/15.5px "Liberation Mono", monospace; transform: scaleX(.83); transform-origin: 0 50%; white-space: nowrap; color: #111; }
.mono > b { letter-spacing: 1px; }

.screen { width: 2120px; height: 1338px; position: relative; background: #000; overflow: hidden; }
.mac { height: 40px; background: #f5f5f5; border-bottom: 1px solid #c4c4c4; display: flex; align-items: center; padding: 0 0 3px 12px; gap: 16px; }
.light { width: 24px; height: 24px; border-radius: 50%; background: #dcdcdc; border: 1px solid #cbcbcb; flex: none; }
.mac-title { margin: 2px 0 0 642px; font: 27px/36px "Inter", sans-serif; letter-spacing: .5px; color: #b3b3b3; white-space: nowrap; }
.vncbar { position: absolute; left: 774px; top: 40px; width: 568px; height: 6px; background: #fff; border-bottom: 1px solid #aaa; display: flex; padding-left: 250px; gap: 126px; }
.vncbar i { width: 2px; height: 4px; background: #bbb; }
.desktop { position: absolute; left: 0; top: 89px; width: 2120px; height: 1194px; overflow: hidden; }

.win { position: absolute; background: #efefef; display: flex; flex-direction: column; overflow: hidden; }
.titlebar { display: flex; align-items: center; background: #fff; flex: none; }
.ticon { width: 18px; height: 18px; flex: none; }
.controls { margin-left: auto; display: flex; gap: 38px; }
.controls svg { width: 12px; height: 12px; }
.menu { display: grid; background: #fff; flex: none; align-items: center; letter-spacing: -.05px; }

.toolbar { display: flex; align-items: center; flex: none; background: #efefef; border-top: 1px solid #fafafa; border-bottom: 1.5px solid #c2c2c2; }
.grip { width: 4px; height: 27px; flex: none; background: repeating-linear-gradient(#b5b5b5 0 2px, transparent 2px 4px) 0 0 / 2px 100% no-repeat; }
.cell { width: 34.25px; height: 33px; flex: none; display: flex; align-items: center; justify-content: center; }
.cell svg { width: 28px; height: 28px; }
.cell.on { background: #bfdcf3; border: 1px solid #8fc6f0; }
.sep { width: 8.5px; height: 27px; flex: none; background: linear-gradient(#d2d2d2, #d2d2d2) 4px 0 / 1px 100% no-repeat; }
.brk { width: 13px; height: 100%; flex: none; display: flex; align-items: center; justify-content: space-between; }
.brk::before { content: ""; width: 1px; height: 100%; margin-left: 3px; background: #b4b4b4; }
.combo { height: 22px; width: 144px; flex: none; border: 1px solid #a8a8a8; background: #e2e2e2; display: flex; align-items: center; justify-content: space-between; padding: 0 6px 0 4px; }
.combo::after { content: ""; border: 4px solid transparent; border-top: 5px solid #111; border-bottom: 0; }
.combo .mono { width: 110px; }

.main-win { left: 0; top: 0; width: 2120px; height: 1150px; }
.main-win .titlebar { height: 25px; color: #8e8e8e; padding-right: 22px; }
.main-win .ticon { margin: 0 5px 0 -2px; }
.main-win .t-main { letter-spacing: .3px; }
.main-win .menu { height: 25px; color: #8e8e8e; padding-left: 5px; grid-template-columns: 38px 48px 69px 53px 70px 85px 99px 60px; }
.main-win .toolbar { height: 38px; padding-left: 1px; }
.main-win .grip { margin-right: 1px; }
.main-win .sep { width: 7px; }
.tabs { display: flex; align-items: flex-end; height: 26px; padding-left: 3px; flex: none; }
.tab { height: 20px; width: 82px; background: #ececec; border: 1px solid #d5d5d5; border-bottom: 0; padding: 0 0 0 9px; line-height: 17px; }
.tab.on { width: 103px; height: 22px; background: #fff; padding-left: 13px; }
.tab:last-child { width: 102px; }
.tab .mono { font-weight: 400; }
.pane { margin: 0 6px 0 0; height: 1001px; background: #fff; border: 1px solid #d9d9d9; padding: 6px; display: flex; flex: none; }
.tree { flex: 1; border: 1px solid #82879a; background: linear-gradient(90deg, #e2e2e2, #f8f8f8 50px, #fff 90px); }
.row { height: 20px; display: flex; align-items: center; color: #1a1a1a; letter-spacing: .3px; }
.row .ic { width: 18px; height: 18px; margin-right: 6px; }
.row .ch { width: 12px; height: 12px; margin-right: 9px; color: #555; }
.l0 { padding-left: 6px; letter-spacing: 0; }
.l1 { padding-left: 30px; }
.l2 { margin-left: 76px; }
.l2.sel { background: #ededed; width: 400px; }
.l1b { padding-left: 52px; }
.main-status { flex: 1; background: linear-gradient(90deg, #e2e2e2, #efefef 90px); padding: 13px 0 0 3px; border-bottom: 2px solid #d2d2d2; color: #1a1a1a; }
.main-status::after { content: ""; float: right; width: 1px; height: 15px; margin-right: 116px; background: #cdcdcd; }

.sch-win { left: 245px; top: 103px; width: 1701px; height: 956px; border: 1px solid #9a9a9a; box-shadow: 0 5px 18px rgba(0,0,0,.35); }
.sch-win .titlebar { height: 32px; color: #8e8e8e; padding: 0 20px 0 9px; }
.sch-win .ticon { margin-right: 4px; }
.sch-win .menu { height: 25px; color: #8e8e8e; padding: 2px 0 0 9px; grid-template-columns: 39px 42px 55px 48px 54px 69px 52px 60px 72px 70px 97px 100px 50px; }
.sch-win .toolbar { height: 45px; padding-left: 489px; align-items: flex-start; border: 0; border-top: 2px solid #f7f7f7; background: linear-gradient(#e9e9e9, #cfcfcf 16px); }
.sch-win .toolbar > .grip { display: none; }
.sch-win .toolbar .cell { padding-top: 5px; align-items: flex-start; }
.sch-win .brk { width: 14px; }
.sch-win .cell svg { flex: none; }
.sch-body { width: 77px; background: #e9e9e9; display: flex; flex-direction: column; padding-left: 1px; }
.dock-head { height: 21px; background: #d8d8d8; border: 1px solid #c2c2c2; display: flex; align-items: center; padding: 0 4px 0 3px; flex: none; }
.dock-head svg { width: 12px; height: 12px; margin-left: 5px; }
.dock-head .mono { width: 40px; }
.dock-head .sp { flex: 1; }
.sch-body .dock-head { margin-top: -4px; }
.stub { height: 22px; border: 1px solid #999; background: #efefef; margin-top: 19px; padding-left: 3px; flex: none; }
.stub.s { margin-top: 40px; background: #f8f8f8; }
.stub.s .mono { color: #888; }
.palette { display: grid; grid-template-columns: 46px 46px; gap: 3.7px; align-content: start; }
.sch-parts { height: 586px; border: 1px solid #888d98; border-top: 0; padding: 49px 0 0 2px; overflow: hidden; background: #efefef; flex: none; }
.part { height: 41.5px; background: #e1e1e1; border: 1px solid #adadad; border-width: 1px 1.500px 1.500px 1px; }
.part svg { display: block; width: 43px; height: 39px; }
.part text { font: 10px "Liberation Sans", sans-serif; fill: #111; stroke: none; }
.sch-parts .part:nth-last-child(-n+2) { height: 33px; }
.sch-body .msg-head { margin-top: 7px; }
.msg { display: flex; margin-top: 2px; height: 88px; flex: none; }
.msg-tools { width: 31px; display: flex; flex-direction: column; align-items: center; gap: 8px; padding-top: 3px; }
.msg-tools svg { width: 18px; height: 18px; }
.msg-text { flex: 1; background: #fff; border: 1px solid #777; padding: 4px 0 4px 4px; display: flex; flex-direction: column; overflow: hidden; }
.msg-text .mono { color: #dba52a; flex: none; }
.sch-status { padding: 6px 0 0 6px; color: #1a1a1a; }

.stat-win { left: 255px; top: 168px; width: 475px; height: 241px; border: 1px solid #9a9a9a; box-shadow: 0 4px 12px rgba(0,0,0,.4); }
.stat-win .titlebar { height: 33px; color: #8e8e8e; padding-left: 8px; }
.stat-win .ticon { margin-right: 5px; }
.stat-body { flex: 1; padding: 9px 0 0 8px; }
.stat-text { background: #fff; border: 1px solid #666; height: 144px; display: flex; flex-direction: column; }
.stat-text .mono { margin-left: 4px; flex: none; }
.hscroll { margin-top: auto; height: 17px; background: #efefef; display: flex; align-items: center; color: #555; flex: none; }
.hscroll i { flex: 1; margin-left: 3px; height: 100%; background: #cdcdcd; }
.stat-body hr { margin: 9px 0 0 -4px; border: 0; border-top: 1.500px solid #222; }
.btn { margin: 10px 0 0 35px; width: 100px; height: 23px; background: #e1e1e1; border: 1px solid #adadad; }
.up { transform: rotate(180deg); }
.left { transform: rotate(90deg); width: 14px; height: 14px; }
.right { transform: rotate(-90deg); width: 14px; height: 14px; }

.lay-win { left: 322px; top: 178px; width: 1701px; height: 955px; border: 1px solid #5c5c5c; box-shadow: 0 6px 26px rgba(0,0,0,.5); }
.lay-win .titlebar { height: 33px; padding: 0 20px 2px 8px; color: #111; }
.lay-win .ticon { margin-right: 5px; }
.lay-win .menu { height: 26px; padding-left: 8px; color: #111; grid-template-columns: 39px 42px 55px 48px 54px 69px 53px 82px 38px 70px 100px 50px; }
.lay-win .toolbar { height: 37px; padding-left: 5px; }
.lay-win .toolbar:nth-of-type(3) { height: 38px; }
.lay-win .toolbar > .grip { margin-right: 1px; }
.lay-win .row3 > .combo { margin-right: -2px; }
.row3 .sep ~ .sep ~ .sep { width: 5px; }
.lay-body { flex: 1; min-height: 0; display: flex; }
.parts { width: 158px; margin-right: 5px; padding: 2px 0 0 1px; display: flex; flex-direction: column; height: 754px; }
.pt-tabs { display: flex; gap: 14px; padding: 10px 0 10px 8px; flex: none; }
.pt-tabs svg { width: 20px; height: 20px; }
.search { display: flex; gap: 6px; align-items: center; flex: none; }
.search svg { width: 17px; height: 18px; }
.field { width: 130px; height: 22px; background: #fff; border: 1px solid #7a7a7a; padding: 1px 2px; line-height: 16px; overflow: hidden; }
.field .mono { color: #777; }
.select { margin-top: 19px; height: 23px; background: #fff; border: 1px solid #8a8a8a; display: flex; align-items: center; justify-content: space-between; padding: 0 4px; flex: none; }
.select svg { width: 12px; height: 12px; color: #555; }
.select .mono { width: 110px; }
.plist { flex: 1; min-height: 0; overflow: hidden; border: 1px solid #888d98; border-top-width: 1.500px; display: flex; justify-content: space-between; }
.lay-parts { padding: 1px 0 0 1px; }
.vscroll { width: 18px; flex: none; border-left: 1px solid #fff; display: flex; flex-direction: column; align-items: center; color: #555; padding: 3px 0; }
.vscroll svg { width: 12px; height: 12px; flex: none; }
.vscroll i { width: 16px; height: 280px; background: #cdcdcd; margin-top: 3px; }
.vscroll .dn { margin-top: auto; }
.view { width: 1141px; display: grid; grid-template: 735px 17px / 1122px 19px; margin-top: 1px; }
.canvas { width: 1122px; height: 735px; background: #000; display: block; }
.axis { stroke: #2c5048; fill: none; }
.metal path { fill: #c00000; stroke: #e80000; }
.dots path { fill: none; stroke: #8a8a8a; stroke-width: 1; }
.dots .maj { stroke: #b4b4b4; }
.bridge path { fill: rgba(0,0,200,.35); stroke: #1400dc; }
.pins path { fill: none; stroke: #00d8d8; }
.pinc path { fill: #00ffff; }
.canvas text { font: 41px "Liberation Sans", sans-serif; fill: #fdebd8; }
.vbar { border: 0; width: 18px; }
.vbar i { height: 235px; margin-top: 237px; }
.hbar { display: flex; align-items: center; color: #555; padding: 0 2px 0 2px; grid-column: 1; }
.hbar i { width: 487px; height: 15px; background: #cdcdcd; margin-left: 301px; }
.hbar .right { margin-left: auto; }
.help { margin-left: 4px; flex: 1; padding-top: 2px; display: flex; flex-direction: column; }
.gearbar { height: 23px; background: #fff; margin-top: 2px; padding: 2px 0 0 9px; flex: none; }
.gearbar svg { width: 18px; height: 18px; }
.helptext { margin-top: 7px; height: 676px; background: #fff; border: 1.500px solid #767676; padding: 4px 0 0 4px; display: flex; flex-direction: column; flex: none; }
.helptext .mono { flex: none; width: 380px; }
.check { display: flex; align-items: center; margin-top: 7px; height: 14px; gap: 5px; }
.check i { width: 15px; height: 14px; border: 1px solid #333; background: #fff; }
.lay-status { height: 27px; display: grid; grid-template-columns: 1022px 129.500px 116.500px 99.500px 137px 137px 36px 20px; align-items: center; color: #111; flex: none; }
.lay-status span { height: 23px; line-height: 24px; border-right: 1px solid #d4d4d4; padding-left: 9px; }
.lay-status .s-msg { padding-left: 6px; letter-spacing: .3px; }
.lay-status .red { color: #f01414; letter-spacing: .05px; }
.lay-status svg { width: 10px; height: 10px; margin: 10px 0 0 7px; }

.taskbar { position: absolute; left: 0; top: 1150px; width: 2120px; height: 44px; background: #060c13; display: flex; align-items: center; }
.tk { width: 44px; height: 44px; display: flex; align-items: center; justify-content: center; flex: none; }
.tk:nth-child(2) { width: 62px; }
.tk:nth-child(3) { width: 52px; }
.tk:nth-child(4) { width: 56px; }
.tk svg { width: 19px; height: 19px; }
.tk svg.big { width: 24px; height: 24px; }
.tk svg.huge { width: 30px; height: 29px; }
.tk.act { width: 53px; background: linear-gradient(90deg, #3b3f45 49px, #1b1f24 49px 50px, #3b3f45 50px); border-bottom: 2px solid #76b9ed; }
.tray { margin-left: auto; display: flex; align-items: center; gap: 6px; }
.tray svg { width: 20px; height: 20px; }
.cn { font: 16px/18px "Noto Sans CJK SC", sans-serif; color: #fff; margin-left: 3px; }
.cn.ime { background: #fff; color: #060c13; font-size: 14px; line-height: 16px; width: 15px; height: 16px; margin-left: 9px; }
.clock { color: #fff; display: flex; flex-direction: column; align-items: center; line-height: 22px; margin-left: 20px; width: 66px; }
.notif { width: 61px; height: 44px; padding: 12px 0 0 19px; border-right: 1px solid #555; margin: 0 3px 0 2px; }
.notif svg { width: 28px; height: 28px; }
.bottom { position: absolute; left: 0; top: 1283px; width: 2120px; height: 55px; background: linear-gradient(90deg, #cfcfcf 1193px, #2b2d30 1193px); }
.bottom::before { content: ""; display: block; height: 48px; background: #000; border-radius: 0 0 8px 8px; }
```

FILE: app.js
```js
// Toolbars: "|" separator, "||" group break, "*" pressed, "combo:" drop-down.
document.querySelectorAll('.toolbar').forEach(bar => {
  let html = '<i class="grip"></i>';
  for (const t of bar.dataset.icons.split(' ')) {
    if (t === '|') html += '<i class="sep"></i>';
    else if (t === '||') html += '<span class="brk"><i class="grip"></i></span>';
    else if (t.startsWith('combo:')) html += `<span class="combo"><span class="mono">${t.slice(6).replace('_', ' ')}</span></span>`;
    else html += `<span class="cell${t.endsWith('*') ? ' on' : ''}"><svg><use href="#${t.replace('*', '')}"/></svg></span>`;
  }
  bar.innerHTML = html;
});

// Part symbols, drawn on a 43 x 39 tile.
const Y = 'fill="#ffff88" stroke="#111"';
const K = 'fill="none" stroke="#111"';
const box = (x, y, w, h) => `<rect x="${x}" y="${y}" width="${w}" height="${h}" ${Y} stroke-width="1.200"/>`;
const shape = d => `<path d="${d}" ${Y} stroke-width="1.200"/>`;
const line = d => `<path d="${d}" ${K} stroke-width="1.200"/>`;
const pin = pts => pts.map(([x, y]) => `<rect x="${x - 1}" y="${y - 1.5}" width="2" height="3" fill="#f01818"/>`).join('');
const comb = (x, w, n) => {
  let d = `M9 6H35M9 22H35`;
  for (let i = 0; i < n; i++) { const px = x + i * w / (n - 1); d += i % 2 ? `M${px} 9V22` : `M${px} 6V19`; }
  return line(d) + pin([[9, 6], [35, 6], [9, 22], [35, 22]]);
};
const cap = (wide, end) => line(`M10 13H16M16 6V20M16 6H${wide ? 31 : 25}M16 13H${wide ? 31 : 25}M16 20H${wide ? 31 : 25}M${wide ? 34 : 29} 4V22M${wide ? 34 : 29} 9.500H20M${wide ? 34 : 29} 16.500H20`) +
  (end ? line('M34 10L38 13 34 16') : line('M29 13H34') + pin([[35, 13]])) + pin([[10, 13]]);
const gcap = line('M9 6H35M15 6V15M18 9V17M21 6V15M24 9V17M27 6V15M30 6V15M17 17H29M23 17V22M20 22H26L23 25Z') + pin([[9, 6], [35, 6]]);
const bend = line('M11 21H16M29 4V9') + shape('M16 19H25V9H34V18L28 25H16Z') + pin([[11, 21], [29, 4]]);
const curve = line('M11 21H15M28 4V8') + shape('M15 18Q23 18 25 8H32Q31 24 15 25Z') + pin([[11, 21], [28, 4]]);
const arts = {
  Maclin: line('M9 10H35M9 18H35') + box(14, 8, 17, 3) + box(14, 15, 17, 6) + pin([[9, 10], [35, 10], [9, 18], [35, 18]]),
  Maclin3: line('M9 6H35M9 15H35M9 24H35') + box(14, 3.5, 17, 5) + box(14, 12, 17, 6) + box(14, 22, 17, 3.5) + pin([[9, 6], [35, 6], [9, 15], [35, 15], [9, 24], [35, 24]]),
  MSABND: bend,
  MSOBND: bend,
  MBstub: line('M13 15H31') + shape('M14 8Q22 2 30 8L24 15 30 22Q22 28 14 22L20 15Z') + pin([[13, 15], [31, 15]]),
  Mcfil: line('M9 7H15M30 22H35') + box(15, 5, 14, 7) + box(15, 17, 14, 7) + pin([[10, 7], [35, 22]]),
  Mclin: line('M9 10H35M9 21H35') + box(14, 7, 17, 6) + box(14, 18, 17, 6) + pin([[9, 10], [35, 10], [9, 21], [35, 21]]),
  Mcorn: line('M11 21H15M29 4V8') + shape('M15 17H25V8H33V25H15Z') + pin([[12, 21], [29, 4]]),
  Mcroso: line('M10 15H34M22 4V26') + shape('M19 8H26V12H31V18H26V23H19V18H14V12H19Z') + pin([[10, 15], [34, 15], [22, 4], [22, 26]]),
  Mcurve: curve,
  'Mcurve ': curve + '<text x="33" y="25">2</text>',
  MGap: line('M10 15H16M21 15H25M30 15H35') + box(16, 12, 5, 7) + box(25, 12, 5, 7) + pin([[10, 15], [35, 15]]),
  MICAP1: cap(0, 0), MICAP2: comb(15, 14, 7), MICAP3: cap(1, 1), MICAP4: gcap,
  MICAPo1: cap(0, 0), MICAPo2: comb(15, 14, 7), MICAPo3: cap(1, 1), MICAPo4: gcap,
  Mlang: comb(18, 9, 4), Mlang6: comb(16, 12, 6), Mlang8: comb(14, 17, 8),
  MLEF: line('M10 15H34M28 10V20M31 10V20M34 11V19M36 13V17') + box(15, 10, 10, 9) + pin([[10, 15]]),
  MLIN: line('M10 14H34') + box(15, 9, 15, 9) + pin([[10, 14], [35, 14]]),
  MLOC: line('M10 14H15') + box(15, 9, 14, 9) + pin([[10, 14]]),
  MLSC: line('M10 14H30M30 9V19M33 11V17M35 12V16') + box(15, 10, 12, 9) + pin([[10, 14]]),
  Mrind: line('M10 14H14V23H28V7H14V14M17 20V10H25V17H20V14H34') + pin([[10, 14], [35, 14]])
};
const labelWidth = s => [...s].reduce((w, c) => w + (/[il1I]/.test(c) ? 3.6 : /[A-Z]/.test(c) ? 5.9 : 4.9), 0);
const tile = (label, art, lx = 21.5, ly = 35) => `<div class="part"><svg viewBox="0 0 43 39" preserveAspectRatio="xMidYMin slice"><path d="M4 3H9L4 8Z" fill="#ffff66"/>${art}` +
  (label ? `<text x="${lx}" y="${ly}" text-anchor="middle" textLength="${labelWidth(label)}" lengthAdjust="spacingAndGlyphs">${label}</text>` : '') + '</svg></div>';
document.querySelector('.lay-parts').innerHTML = Object.keys(arts).map(k => tile(k.trim(), arts[k])).join('');

const cog = '<rect x="8" y="3" width="29" height="20" fill="#d0d0d0" stroke="#fff"/><path d="M37 4V23H8" fill="none" stroke="#888"/>' +
  '<path d="M13 8H17L19 5H26L28 8H32V12H34V17H31L29 20H25L22 17 19 20H16L14 17H11V12H13Z" fill="#f4f070" stroke="#111" stroke-width="1.500"/><path d="M20 5H25V14H20Z" fill="#ccc" stroke="#333"/>';
const opt = '<rect x="8" y="3" width="29" height="20" fill="#e8e8e8" stroke="#888"/><rect x="10" y="5" width="25" height="4" fill="#101080"/><path d="M13 12H22V20H13ZM25 12H32V17H25ZM25 20H32" fill="#fff" stroke="#666"/>';
const stat = '<path d="M11 13H14V28H11Z" fill="#8a1010"/><path d="M18 22H21V28H18ZM24 25H27V28H24Z" fill="#8a1010"/>';
const card = (a, b) => `<rect x="9" y="8" width="30" height="24" fill="#e8e8e8" stroke="#111" stroke-width="1.500"/><text x="11" y="18">${a}</text><text x="11" y="29">${b}</text>`;
document.querySelector('.sch-parts').innerHTML =
  tile('', '') + tile('', '') + tile('Yield', cog) + tile('', cog) + tile('DOE', cog) + tile('', card('Do', 'Go')) +
  tile('PrmSwp', cog) + tile('', card('Sw', 'Pl')) + tile('Sens', cog) + tile('', card('Me', 'Eq')) +
  tile('Options', opt) + tile('', card('St', 'Co')) + tile('stat', stat, 26, 20) + tile('', stat);

// Layout grid: minor dots every fifth of a major step, crosses on the major points.
let dots = '', maj = '';
for (let i = -11; i <= 16; i++) for (let j = -15; j <= 3; j++) {
  const x = Math.round(934.3 + i * 41.78), y = Math.round(1058 + j * 41.68);
  if (x < 487 || x > 1606 || y < 441) continue;
  if (i % 5 === 0 && j % 5 === 0) maj += `M${x - 2} ${y + .5}h5M${x + .5} ${y - 2}v5`;
  else dots += `M${x} ${y + .5}h1`;
}
document.querySelector('.dots').innerHTML = `<path d="${dots}"/><path class="maj" d="${maj}"/>`;
```
